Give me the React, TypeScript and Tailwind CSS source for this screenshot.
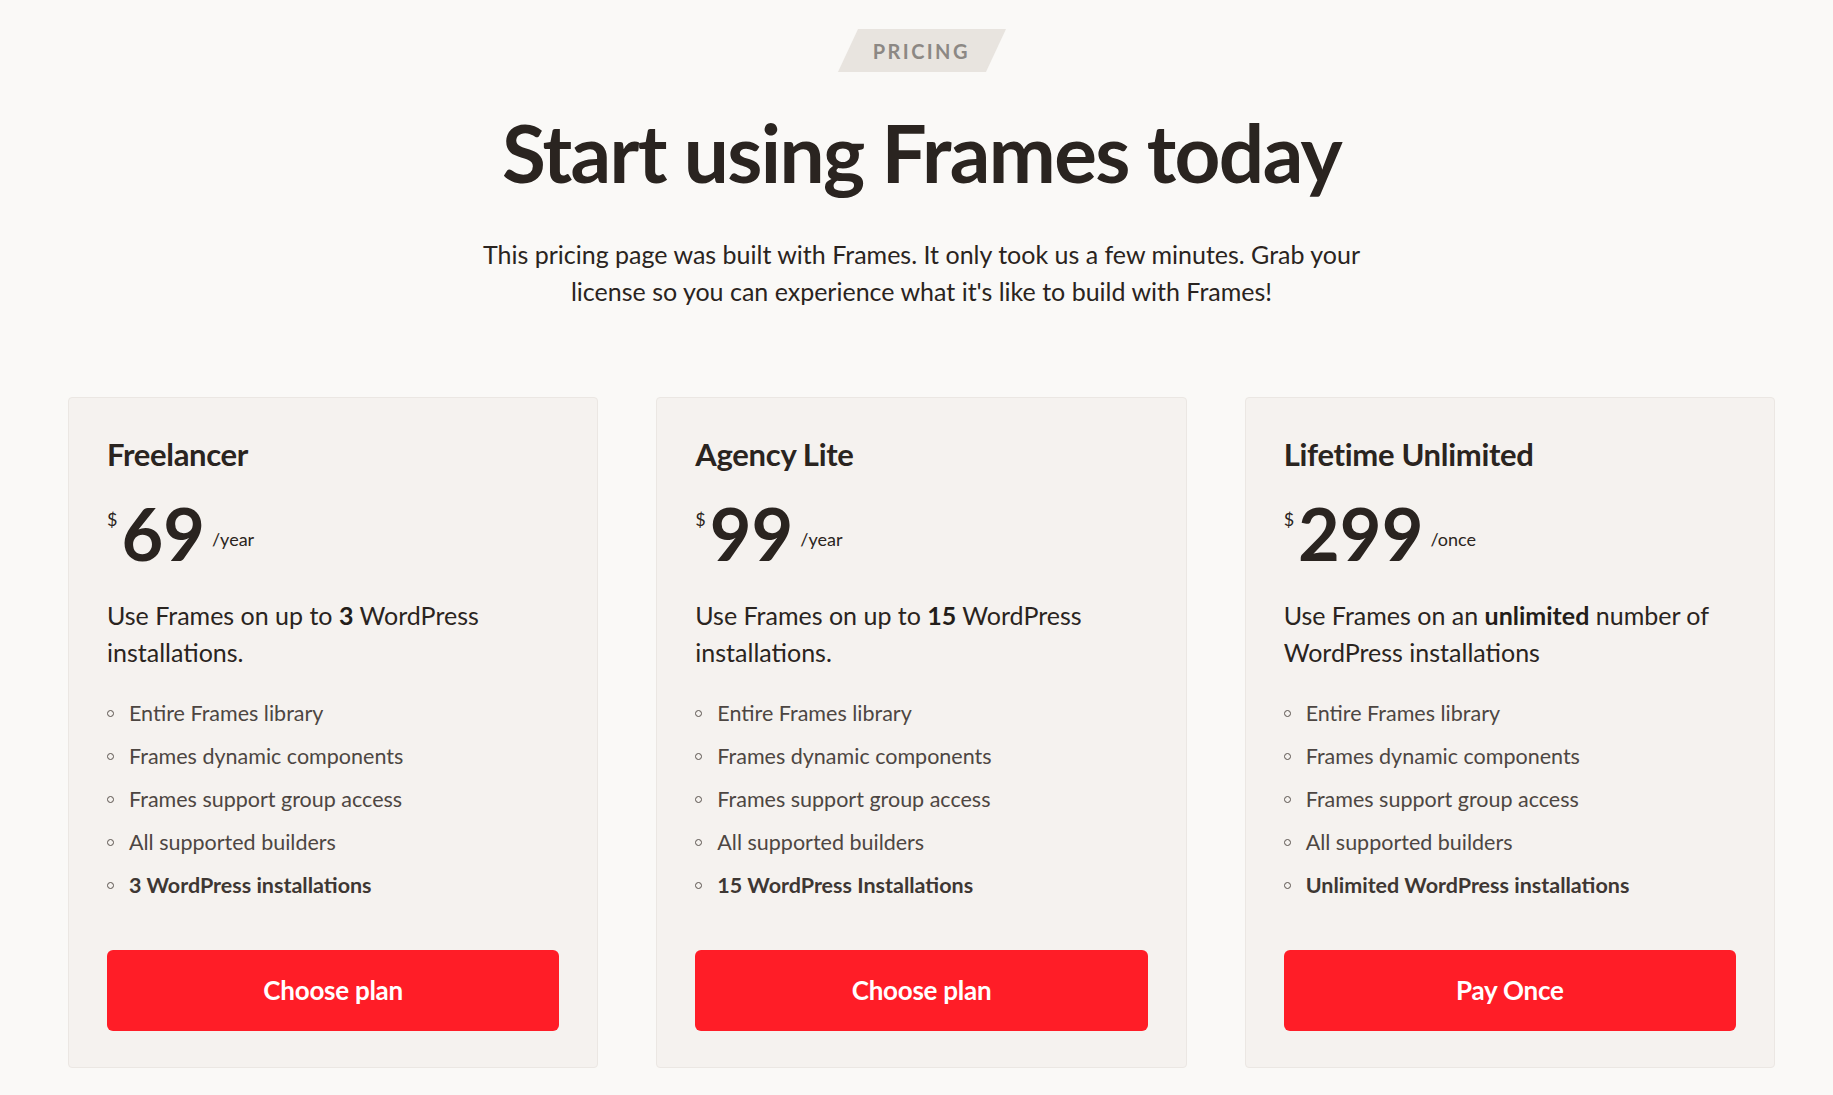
const plans = [
  {
    name: 'Freelancer',
    price: '69',
    period: '/year',
    desc: (
      <>
        Use Frames on up to <strong className="font-bold text-[#231d19]">3</strong> WordPress installations.
      </>
    ),
    last: '3 WordPress installations',
    cta: 'Choose plan',
  },
  {
    name: 'Agency Lite',
    price: '99',
    period: '/year',
    desc: (
      <>
        Use Frames on up to <strong className="font-bold text-[#231d19]">15</strong> WordPress installations.
      </>
    ),
    last: '15 WordPress Installations',
    cta: 'Choose plan',
  },
  {
    name: 'Lifetime Unlimited',
    price: '299',
    period: '/once',
    desc: (
      <>
        Use Frames on an <strong className="font-bold text-[#231d19]">unlimited</strong> number of WordPress installations
      </>
    ),
    last: 'Unlimited WordPress installations',
    cta: 'Pay Once',
  },
];

const features = [
  'Entire Frames library',
  'Frames dynamic components',
  'Frames support group access',
  'All supported builders',
];

function Bullet() {
  return <span className="mt-[1px] h-[7px] w-[7px] shrink-0 rounded-full border border-[#5a534e]" />;
}

export default function App() {
  return (
    <div className="min-h-screen bg-[#faf9f7] font-['Lato',sans-serif] text-[#2a2420] flex flex-col items-center pl-[10px] pt-[29px] pb-[28px]">
      {/* Eyebrow */}
      <div className="-skew-x-[25deg] bg-[#e8e4df] w-[148px] h-[43px] flex items-center justify-center">
        <span className="skew-x-[25deg] text-[20px] font-bold tracking-[0.12em] text-[#8c8884]">PRICING</span>
      </div>

      {/* Heading */}
      <h1 className="mt-[32px] text-[80px] leading-[1.2] font-bold tracking-[-0.02em] text-[#2a2420]">
        Start using Frames today
      </h1>
      <p className="mt-[36px] max-w-[890px] text-center text-[25px] leading-[37px] text-[#2a2420]">
        This pricing page was built with Frames. It only took us a few minutes. Grab your license so you can experience what it's like to build with Frames!
      </p>

      {/* Cards */}
      <div className="mt-[87px] w-full max-w-[1707px] grid grid-cols-3 gap-[58px]">
        {plans.map((p) => (
          <div
            key={p.name}
            className="bg-[#f5f2ef] border border-[#ebe7e3] rounded-[4px] px-[38px] pt-[36px] pb-[36px] flex flex-col"
          >
            <h2 className="text-[31px] leading-[40px] font-bold tracking-[-0.01em] text-[#2a2420]">{p.name}</h2>
            <div className="mt-[22px] flex items-end">
              <span className="self-start text-[18px] leading-none mt-[14px] mr-[4px] text-[#2a2420]">$</span>
              <span className="text-[72px] leading-[74px] font-bold text-[#2a2420]">{p.price}</span>
              <span className="text-[18px] leading-[22px] mb-[20px] ml-[7px] text-[#2a2420]">{p.period}</span>
            </div>
            <p className="mt-[27px] text-[25px] leading-[37px] text-[#2a2420]">{p.desc}</p>
            <ul className="mt-[29px] flex flex-col gap-[17px]">
              {features.map((f) => (
                <li key={f} className="flex items-center gap-[15px] text-[21.5px] leading-[26px] text-[#4d4642]">
                  <Bullet />
                  {f}
                </li>
              ))}
              <li className="flex items-center gap-[15px] text-[21.5px] leading-[26px] font-bold text-[#3e3733]">
                <Bullet />
                {p.last}
              </li>
            </ul>
            <button className="mt-[52px] h-[81px] w-full rounded-[6px] bg-[#ff1d27] text-white text-[26px] font-bold tracking-[-0.01em]">
              {p.cta}
            </button>
          </div>
        ))}
      </div>
    </div>
  );
}
